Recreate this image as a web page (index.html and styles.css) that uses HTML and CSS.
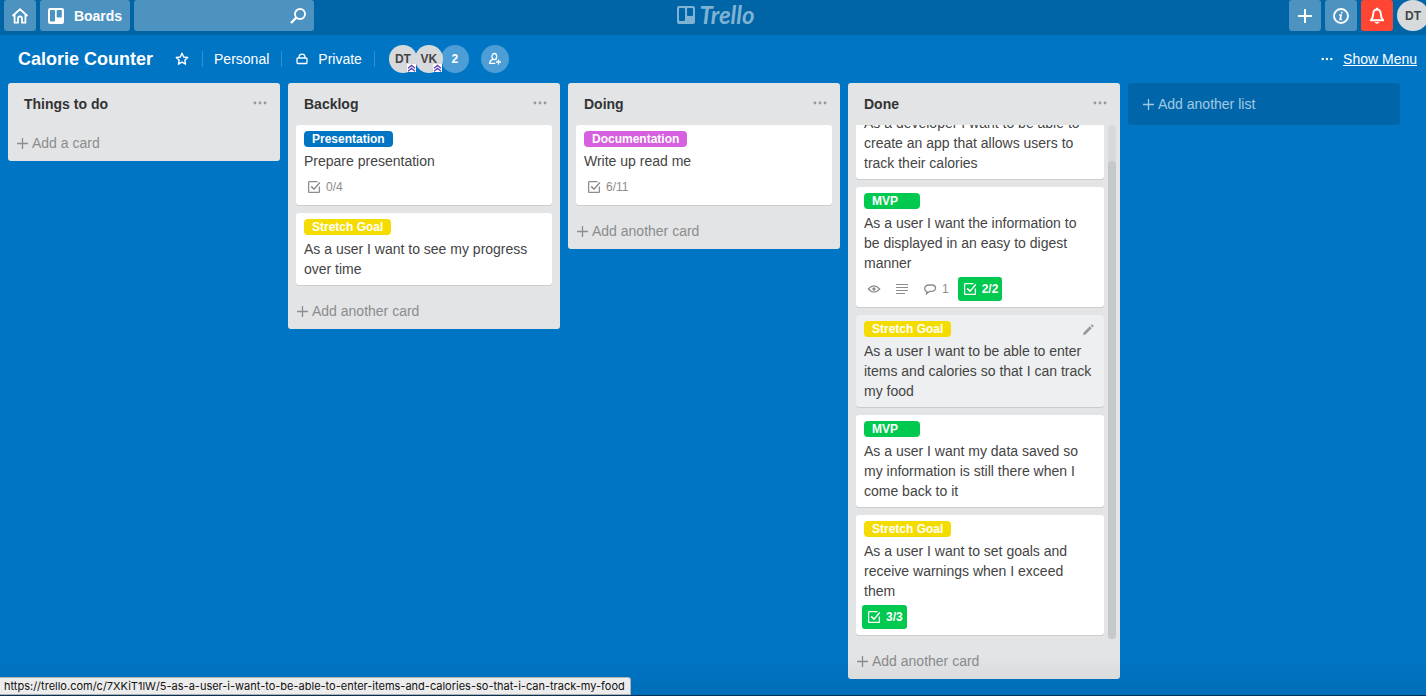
FILE: index.html
```html
<!DOCTYPE html>
<html lang="en">
<head>
<meta charset="utf-8">
<title>Calorie Counter | Trello</title>
<link rel="stylesheet" href="styles.css">
</head>
<body>
<svg class="sprite" aria-hidden="true">
  <symbol id="plus" viewBox="0 0 11 11"><path d="M5.5 0v11M0 5.5h11" fill="none" stroke="currentColor" stroke-width="1.3"/></symbol>
  <symbol id="dots" viewBox="0 0 14 4"><g fill="currentColor"><circle cx="2" cy="2" r="1.4"/><circle cx="7" cy="2" r="1.4"/><circle cx="12" cy="2" r="1.4"/></g></symbol>
  <symbol id="check" viewBox="0 0 14 14"><g fill="none" stroke="currentColor" stroke-width="1.3"><path d="M10.5 1.7H2.2Q1.6 1.7 1.6 2.3V11.8Q1.6 12.4 2.2 12.4H11.8Q12.4 12.4 12.4 11.8V6.5"/><path d="M4.2 6.4L7 9.2L12.8 2.6" stroke-width="1.5"/></g></symbol>
  <symbol id="rank" viewBox="0 0 9 8"><path d="M0 0h9v8H0z" fill="#fff"/><path d="M1 4.2L4.5 1.4L8 4.2M1 7.2L4.5 4.4L8 7.2" fill="none" stroke="#5a3fc0" stroke-width="1.3"/></symbol>
</svg>

<header class="topbar">
  <div class="topbar-group">
    <button class="top-btn" type="button" aria-label="Home">
      <svg width="18" height="18" viewBox="0 0 18 18" fill="none" stroke="currentColor" stroke-width="1.8"><path d="M1.5 9L9 2.3L16.500 9M3.600 7.800V15.600H7V11.500Q7 9.500 9 9.500T11 11.500V15.600H14.400V7.800"/></svg>
    </button>
    <button class="top-btn boards-btn" type="button">
      <svg width="16" height="16" viewBox="0 0 16 16"><path fill="currentColor" fill-rule="evenodd" d="M2 0H14Q16 0 16 2V14Q16 16 14 16H2Q0 16 0 14V2Q0 0 2 0ZM2.800 1.900Q2 1.900 2 2.700V12.700Q2 13.500 2.800 13.500H6.200Q7 13.500 7 12.700V2.700Q7 1.900 6.200 1.900ZM9.500 1.900Q8.700 1.900 8.700 2.700V8.700Q8.700 9.500 9.500 9.500H13Q13.800 9.500 13.800 8.700V2.700Q13.800 1.900 13 1.900Z"/></svg>
      <span>Boards</span>
    </button>
    <form class="search" role="search">
      <input class="search-input" type="text" aria-label="Search">
      <button class="search-btn" type="button" aria-label="Search">
        <svg width="18" height="18" viewBox="0 0 18 18" fill="none" stroke="currentColor"><circle cx="11" cy="7" r="5" stroke-width="1.900"/><path d="M7.300 10.700L2 16" stroke-width="2.400"/></svg>
      </button>
    </form>
  </div>
  <a class="logo" href="#" aria-label="Trello home">
    <svg width="18" height="18" viewBox="0 0 18 18"><path fill="currentColor" fill-rule="evenodd" d="M2 0H16Q18 0 18 2V16Q18 18 16 18H2Q0 18 0 16V2Q0 0 2 0ZM3 2Q2 2 2 3V14Q2 15 3 15H7Q8 15 8 14V3Q8 2 7 2ZM11 2Q10 2 10 3V9Q10 10 11 10H15Q16 10 16 9V3Q16 2 15 2Z"/></svg>
    <span>Trello</span>
  </a>
  <div class="topbar-group topbar-end">
    <button class="top-btn" type="button" aria-label="Create">
      <svg width="14" height="14" viewBox="0 0 14 14"><path d="M7 0v14M0 7h14" stroke="currentColor" stroke-width="2"/></svg>
    </button>
    <button class="top-btn" type="button" aria-label="Information">
      <svg width="16" height="16" viewBox="0 0 16 16" fill="none" stroke="currentColor"><circle cx="8" cy="8" r="7" stroke-width="1.900"/><path d="M8.900 3.800L8.600 5.300M6.300 7.200H8L7.200 11.500H8.900" stroke-width="1.700"/></svg>
    </button>
    <button class="top-btn alert" type="button" aria-label="Notifications">
      <svg width="16" height="18" viewBox="0 0 16 18" fill="none" stroke="currentColor"><path d="M8 2.500Q4.600 2.500 4.300 6.500Q4.200 10.500 1.800 13.300H14.200Q11.800 10.500 11.700 6.500Q11.400 2.500 8 2.500Z" stroke-width="1.900" stroke-linejoin="round"/><path d="M8 .8V3" stroke-width="2"/><path d="M5.500 15H10.500Q9.800 16.800 8 16.800T5.500 15" fill="currentColor" stroke="none"/></svg>
    </button>
    <button class="avatar account" type="button">DT</button>
  </div>
</header>

<div class="boardbar">
  <h1 class="board-name">Calorie Counter</h1>
  <button class="bar-btn star" type="button" aria-label="Star board">
    <svg width="14" height="14" viewBox="0 0 14 14"><path d="M7 1.300L8.700 5L12.700 5.500L9.800 8.200L10.500 12.200L7 10.200L3.500 12.200L4.200 8.200L1.300 5.500L5.300 5Z" fill="none" stroke="currentColor" stroke-width="1.400" stroke-linejoin="round"/></svg>
  </button>
  <a class="bar-btn team" href="#">Personal</a>
  <button class="bar-btn privacy" type="button">
    <svg width="12" height="12" viewBox="0 0 12 12" fill="none" stroke="currentColor" stroke-width="1.300"><rect x="1" y="5" width="10" height="5.500" rx="1"/><path d="M3.200 5V3.500Q3.200 1.200 6 1.200T8.800 3.500V5"/></svg>
    Private
  </button>
  <div class="members">
    <button class="avatar" type="button">DT<svg class="rank" width="9" height="8"><use href="#rank"/></svg></button>
    <button class="avatar" type="button">VK<svg class="rank" width="9" height="8"><use href="#rank"/></svg></button>
    <button class="avatar tinted more" type="button">2</button>
  </div>
  <button class="avatar tinted invite" type="button" aria-label="Invite">
    <svg width="14" height="14" viewBox="0 0 14 14" fill="none" stroke="currentColor" stroke-width="1.300"><ellipse cx="6.300" cy="4.500" rx="2.400" ry="3"/><path d="M5 7.400Q2 8.200 1.600 11.300H7.300M7.600 7.700L8.500 8M10.500 7.500V12.500M8 10H13"/></svg>
  </button>
  <a class="show-menu" href="#"><svg width="12" height="4" viewBox="0 0 14 4"><use href="#dots"/></svg><span>Show Menu</span></a>
</div>

<main class="board">
  <section class="list">
    <div class="list-head"><h2>Things to do</h2><button class="list-menu" type="button" aria-label="List actions"><svg width="14" height="4"><use href="#dots"/></svg></button></div>
    <button class="add" type="button"><svg width="11" height="11"><use href="#plus"/></svg>Add a card</button>
  </section>

  <section class="list">
    <div class="list-head"><h2>Backlog</h2><button class="list-menu" type="button" aria-label="List actions"><svg width="14" height="4"><use href="#dots"/></svg></button></div>
    <div class="cards">
      <article class="card">
        <span class="label blue">Presentation</span>
        <p>Prepare presentation</p>
        <div class="badges"><span class="badge"><svg width="14" height="14"><use href="#check"/></svg>0/4</span></div>
      </article>
      <article class="card">
        <span class="label yellow">Stretch Goal</span>
        <p>As a user I want to see my progress over time</p>
      </article>
    </div>
    <button class="add" type="button"><svg width="11" height="11"><use href="#plus"/></svg>Add another card</button>
  </section>

  <section class="list">
    <div class="list-head"><h2>Doing</h2><button class="list-menu" type="button" aria-label="List actions"><svg width="14" height="4"><use href="#dots"/></svg></button></div>
    <div class="cards">
      <article class="card">
        <span class="label purple">Documentation</span>
        <p>Write up read me</p>
        <div class="badges"><span class="badge"><svg width="14" height="14"><use href="#check"/></svg>6/11</span></div>
      </article>
    </div>
    <button class="add" type="button"><svg width="11" height="11"><use href="#plus"/></svg>Add another card</button>
  </section>

  <section class="list">
    <div class="list-head"><h2>Done</h2><button class="list-menu" type="button" aria-label="List actions"><svg width="14" height="4"><use href="#dots"/></svg></button></div>
    <div class="scroller">
      <div class="viewport">
        <div class="cards">
          <article class="card">
            <span class="label green">MVP</span>
            <p>As a developer I want to be able to create an app that allows users to track their calories</p>
          </article>
          <article class="card">
            <span class="label green">MVP</span>
            <p>As a user I want the information to be displayed in an easy to digest manner</p>
            <div class="badges">
              <span class="badge"><svg width="14" height="14" viewBox="0 0 14 14" fill="none" stroke="currentColor"><path d="M1.300 7Q7 .8 12.700 7Q7 13.200 1.300 7Z" stroke-width="1.200"/><circle cx="7" cy="7" r="1.700" fill="currentColor" stroke="none"/></svg></span>
              <span class="badge"><svg width="14" height="14" viewBox="0 0 14 14"><path d="M1 2.500H13M1 5.500H13M1 8.500H13M1 11.500H10" stroke="currentColor" stroke-width="1.200"/></svg></span>
              <span class="badge"><svg width="14" height="14" viewBox="0 0 14 14"><path d="M4 9.700Q1.700 8.900 1.700 6.500Q1.900 3.200 6 3H9Q12.500 3.100 12.500 6Q12.300 9.200 8.500 9.400H6.500L3.300 12Z" fill="none" stroke="currentColor" stroke-width="1.300" stroke-linejoin="round"/></svg>1</span>
              <span class="badge complete"><svg width="14" height="14"><use href="#check"/></svg>2/2</span>
            </div>
          </article>
          <article class="card active">
            <button class="edit" type="button" aria-label="Edit card"><svg width="12" height="12" viewBox="0 0 12 12" fill="currentColor"><path d="M1 11L1.600 8.500L7.800 2.300L9.700 4.200L3.500 10.400ZM8.600 1.500L9.500 .6Q10 .3 10.500 .7L11.300 1.500Q11.700 2 11.400 2.500L10.500 3.400Z"/></svg></button>
            <span class="label yellow">Stretch Goal</span>
            <p>As a user I want to be able to enter items and calories so that I can track my food</p>
          </article>
          <article class="card">
            <span class="label green">MVP</span>
            <p>As a user I want my data saved so my information is still there when I come back to it</p>
          </article>
          <article class="card">
            <span class="label yellow">Stretch Goal</span>
            <p>As a user I want to set goals and receive warnings when I exceed them</p>
            <div class="badges"><span class="badge complete"><svg width="14" height="14"><use href="#check"/></svg>3/3</span></div>
          </article>
        </div>
      </div>
      <div class="track"><div class="thumb"></div></div>
    </div>
    <button class="add" type="button"><svg width="11" height="11"><use href="#plus"/></svg>Add another card</button>
  </section>

  <button class="add add-list" type="button"><svg width="11" height="11"><use href="#plus"/></svg>Add another list</button>
</main>

<div class="shade"></div>
<div class="status">https://trello.com/c/7XKiT1lW/5-as-a-user-i-want-to-be-able-to-enter-items-and-calories-so-that-i-can-track-my-food</div>
</body>
</html>
```

FILE: styles.css
```css
* { box-sizing: border-box; }

body {
  display: flex;
  flex-direction: column;
  height: 100vh;
  margin: 0;
  overflow: hidden;
  background: #0075c4;
  border-bottom: 1px solid #06365c;
  color: #444;
  font: 14px/20px "Liberation Sans", Arial, sans-serif;
}

button, input { font: inherit; }
button { margin: 0; padding: 0; border: 0; background: none; color: inherit; cursor: pointer; }
a { color: inherit; text-decoration: none; }
svg { display: block; flex: none; }
h1, h2, p { margin: 0; }
.sprite { position: absolute; width: 0; height: 0; }

/* Top bar */
.topbar {
  display: grid;
  grid-template-columns: 1fr auto 1fr;
  flex: none;
  height: 35px;
  padding-left: 6px;
  background: #0065a6;
  color: #fff;
}
.topbar-group { display: flex; gap: 4px; height: 31px; margin-left: -2px; }
.topbar-end { justify-content: flex-end; margin-right: -3px; }
.top-btn {
  display: flex;
  align-items: center;
  justify-content: center;
  width: 32px;
  border-radius: 3px;
  background: #4c93c1;
}
.boards-btn { gap: 10px; width: 90px; font-weight: bold; }
.alert { background: #ff4632; }
.search {
  display: flex;
  align-items: center;
  width: 180px;
  padding-right: 7px;
  border-radius: 3px;
  background: #4c93c1;
}
.search-input { flex: 1; min-width: 0; border: 0; background: none; color: #fff; outline: 0; }
.logo {
  display: flex;
  align-items: center;
  gap: 4px;
  height: 30px;
  color: #7fb2d3;
  font: italic bold 24px/26px Lato, sans-serif;
}

.avatar {
  position: relative;
  width: 28px;
  height: 28px;
  border-radius: 50%;
  background: #d6dadc;
  color: #444;
  font-size: 12px;
  font-weight: bold;
}
.account { width: 32px; height: 31px; }

/* Board bar */
.boardbar {
  display: flex;
  align-items: center;
  flex: none;
  height: 48px;
  padding: 0 9px 0 18px;
  color: #fff;
}
.board-name { font-size: 18px; line-height: 24px; }
.bar-btn { display: flex; align-items: center; gap: 10px; height: 16px; }
.star { padding: 0 13px 0 22px; }
.team, .privacy { border-left: 1px solid #3390d0; }
.team { padding: 0 12px 0 11px; }
.privacy { padding: 0 12px 0 14px; border-right: 1px solid #3390d0; }
.members { display: flex; margin-left: 14px; }
.members .avatar + .avatar { margin-left: -2px; }
.members .more { z-index: -1; }
.tinted { background: #4d9ed6; color: #fff; }
.invite { display: flex; align-items: center; justify-content: center; margin-left: 12px; }
.rank { position: absolute; right: 1px; bottom: 1px; }
.show-menu { display: flex; align-items: center; gap: 10px; margin-left: auto; }
.show-menu span { text-decoration: underline; }

/* Lists */
.board {
  display: flex;
  align-items: flex-start;
  flex: 1;
  gap: 8px;
  min-height: 0;
  padding: 0 8px 16px;
}
.list {
  display: flex;
  flex-direction: column;
  flex: none;
  width: 272px;
  max-height: 100%;
  border-radius: 3px;
  background: #e2e4e6;
}
.list-head {
  display: flex;
  align-items: center;
  justify-content: space-between;
  flex: none;
  height: 42px;
  padding: 0 13px 0 16px;
}
.list-head h2 { color: #333; font-size: 14px; line-height: 20px; }
.list-menu { padding-bottom: 2px; color: #999; }
.cards { padding: 0 8px; }
.card {
  position: relative;
  margin-bottom: 8px;
  padding: 6px 8px;
  border-radius: 3px;
  background: #fff;
  box-shadow: 0 1px 0 #ccc;
}
.card p { padding-right: 2px; }
.card.active { background: #edeff0; }
.edit { position: absolute; top: 9px; right: 10px; color: #999; }

.label {
  display: block;
  width: fit-content;
  min-width: 56px;
  height: 16px;
  margin-bottom: 4px;
  padding: 0 8px;
  border-radius: 4px;
  color: #fff;
  font-size: 12px;
  font-weight: bold;
  line-height: 16px;
}
.blue { background: #0075c4; }
.yellow { background: #f5dc00; }
.purple { background: #d660e0; }
.green { background: #00c950; }

.badges { display: flex; gap: 4px; margin: 4px 0 0 -2px; }
.badge {
  display: flex;
  align-items: center;
  gap: 5px;
  height: 24px;
  padding: 0 4px 0 5px;
  border-radius: 3px;
  color: #8c8c8c;
  font-size: 12px;
}
.badge svg:only-child { margin-right: 0; }
.complete { background: #00c950; color: #fff; font-weight: bold; }

.scroller { display: flex; min-height: 0; padding-right: 4px; }
.viewport { display: flex; flex-direction: column-reverse; flex: 1; overflow: hidden; }
.viewport .cards { padding-right: 4px; }
.viewport .badges { gap: 5px; }
.track {
  display: flex;
  flex-direction: column;
  justify-content: flex-end;
  width: 8px;
  margin-bottom: 4px;
  border-radius: 4px;
  background: #d6dadc;
}
.thumb { height: 93%; border-radius: 4px; background: #c4c9cc; }

.add {
  display: flex;
  align-items: center;
  flex: none;
  gap: 4px;
  height: 36px;
  padding-left: 9px;
  color: #8c8c8c;
}
.add-list {
  width: 272px;
  height: 42px;
  padding-left: 15px;
  border-radius: 3px;
  background: #0066a9;
  color: #a3c9e2;
}

/* Overlays at the window's lower edge */
.shade {
  position: fixed;
  inset: auto 0 0;
  height: 40px;
  background: linear-gradient(rgba(0, 0, 0, 0), rgba(0, 0, 0, .06));
  pointer-events: none;
}
.status {
  position: fixed;
  bottom: 1px;
  left: 0;
  height: 18px;
  padding: 0 5px 0 4px;
  border: 1px solid #b0b0b0;
  border-left: 0;
  border-radius: 0 3px 0 0;
  background: #ececec;
  color: #111;
  font: 11px/16px Inter, sans-serif;
  white-space: nowrap;
}
```
